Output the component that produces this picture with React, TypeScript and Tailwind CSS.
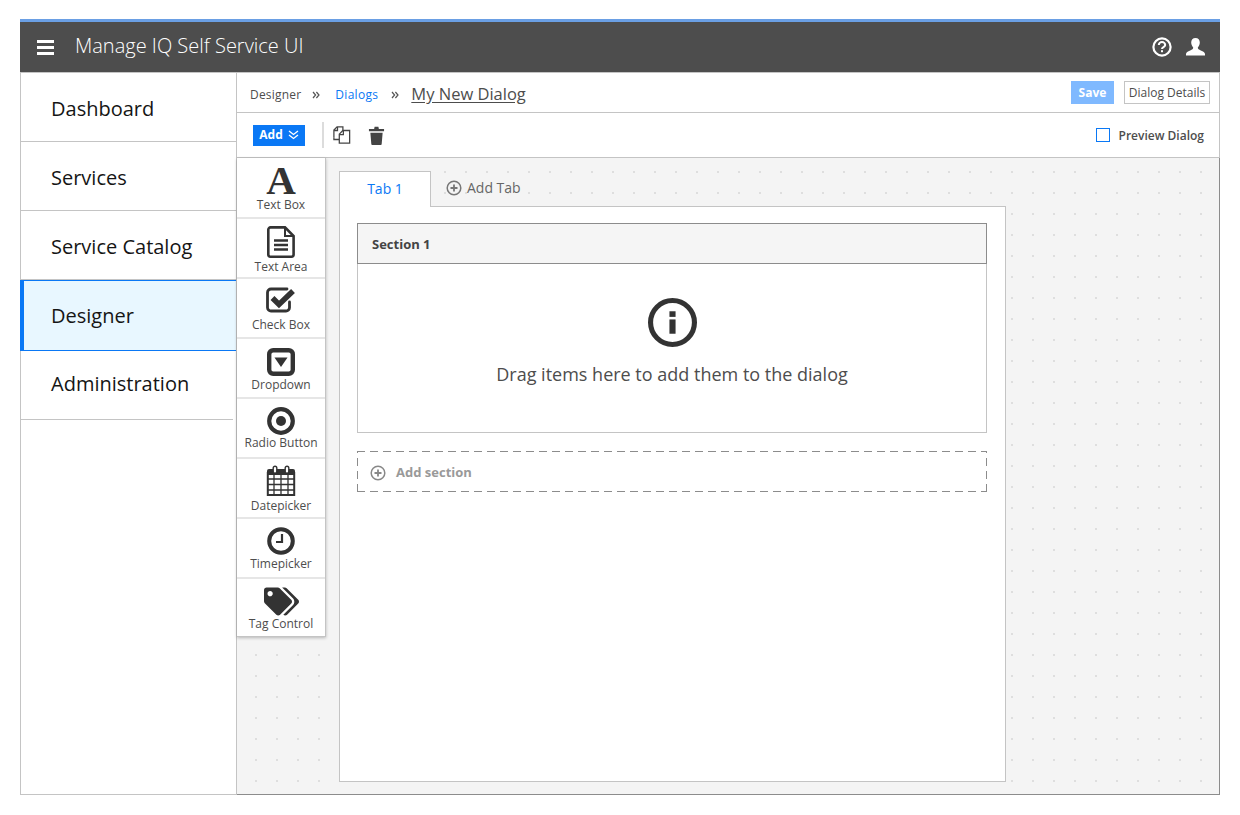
import React from "react";
import { FaTags } from "react-icons/fa";

const ic = "#333333";

const FileIcon = () => (
  <svg width="28" height="32" viewBox="0 0 28 32" fill="none">
    <path d="M3.500 1.400h14.500l8.600 8.600v18.500a2.200 2.200 0 0 1-2.200 2.200H3.500a2.200 2.200 0 0 1-2.200-2.200V3.600a2.200 2.200 0 0 1 2.200-2.200z" stroke={ic} strokeWidth="2.600" />
    <path d="M18 1.500v8.500h8.500" stroke={ic} strokeWidth="2" />
    <path d="M7 14.500h14M7 19h14M7 23.500h14" stroke={ic} strokeWidth="2.400" />
  </svg>
);
const CheckIcon = () => (
  <svg width="30" height="26" viewBox="0 0 30 26" fill="none">
    <path d="M21 2H5a3.500 3.500 0 0 0-3.500 3.500v15A3.500 3.500 0 0 0 5 24h15a3.500 3.500 0 0 0 3.500-3.500V15" stroke={ic} strokeWidth="2.800" strokeLinecap="round" />
    <path d="M6.500 11l6.500 6.500L27 4" stroke={ic} strokeWidth="5.500" />
  </svg>
);
const DropIcon = () => (
  <svg width="28" height="28" viewBox="0 0 28 28" fill="none">
    <rect x="2.200" y="2.200" width="23.600" height="23.600" rx="4" stroke={ic} strokeWidth="4.400" />
    <path d="M7.500 9.500h13L14 19z" fill={ic} />
  </svg>
);
const RadioIcon = () => (
  <svg width="28" height="28" viewBox="0 0 28 28" fill="none">
    <circle cx="14" cy="14" r="11.800" stroke={ic} strokeWidth="4.200" />
    <circle cx="14" cy="14" r="5" fill={ic} />
  </svg>
);
const CalIcon = () => (
  <svg width="30" height="32" viewBox="0 0 30 32" fill="none">
    <path d="M3 4h24a2 2 0 0 1 2 2v4H1V6a2 2 0 0 1 2-2z" fill={ic} />
    <rect x="1.800" y="8" width="26.400" height="22" stroke={ic} strokeWidth="2" />
    <path d="M1 14h28M1 19.500h28M1 25h28M8 9v21M15 9v21M22 9v21" stroke={ic} strokeWidth="1.300" />
    <rect x="7.200" y="1.200" width="3.600" height="7" rx="1.800" fill="#fff" stroke={ic} strokeWidth="1.400" />
    <rect x="19.200" y="1.200" width="3.600" height="7" rx="1.800" fill="#fff" stroke={ic} strokeWidth="1.400" />
  </svg>
);
const ClockIcon = () => (
  <svg width="28" height="28" viewBox="0 0 28 28" fill="none">
    <circle cx="14" cy="14" r="11.800" stroke={ic} strokeWidth="4" />
    <path d="M15 7v8H9" stroke={ic} strokeWidth="2.200" />
  </svg>
);
const PlusCircle = ({ color, size }: { color: string; size: number }) => (
  <svg width={size} height={size} viewBox="0 0 16 16" fill="none">
    <circle cx="8" cy="8" r="6.800" stroke={color} strokeWidth="1.500" />
    <path d="M8 4.500v7M4.500 8h7" stroke={color} strokeWidth="1.800" />
  </svg>
);
const DoubleChevronRight = () => (
  <svg width="8" height="8" viewBox="0 0 8 8" fill="none">
    <path d="M1 1l2.600 3L1 7M4.400 1L7 4 4.400 7" stroke="#555" strokeWidth="1.200" />
  </svg>
);

const palette: { label: string; icon: React.ReactNode; item: string; top: string }[] = [
  { label: "Text Box", icon: <span className="font-['Liberation_Serif',serif] font-bold text-[41px] leading-[30px] text-[#333]">A</span>, item: "h-[61px]", top: "h-[39px] pt-[7px]" },
  { label: "Text Area", icon: <FileIcon />, item: "h-[60px]", top: "h-[40px] pt-[7px]" },
  { label: "Check Box", icon: <CheckIcon />, item: "h-[60px]", top: "h-[38px] pt-[8px]" },
  { label: "Dropdown", icon: <DropIcon />, item: "h-[60px]", top: "h-[38px] pt-[9px]" },
  { label: "Radio Button", icon: <RadioIcon />, item: "h-[60px]", top: "h-[36px] pt-[8px]" },
  { label: "Datepicker", icon: <CalIcon />, item: "h-[60px]", top: "h-[39px] pt-[6px]" },
  { label: "Timepicker", icon: <ClockIcon />, item: "h-[60px]", top: "h-[37px] pt-[8px]" },
  { label: "Tag Control", icon: <FaTags size={35} color={ic} />, item: "h-[57px]", top: "h-[37px] pt-[5px]" },
];

const navClass: Record<string, string> = {
  Dashboard: "h-[69px] pt-[4px] border-b border-[#c4c4c4] pl-[30px]",
  Services: "h-[69px] pt-[4px] border-b border-[#c4c4c4] pl-[30px]",
  "Service Catalog": "h-[69px] pt-[4px] border-b border-[#c4c4c4] pl-[30px]",
  Designer: "h-[71px] -ml-[1px] bg-[#e8f7ff] border-l-[4px] border-y border-[#0a78f5] pl-[27px]",
  Administration: "h-[69px] pb-[3px] mr-[3px] border-b border-[#c4c4c4] pl-[30px]",
};

export default function App() {
  return (
    <div className="w-[1240px] h-[815px] bg-white pt-[19px] px-[20px] font-['Open_Sans',sans-serif] overflow-hidden">
      <header className="h-[54px] border-t-[3px] border-b border-t-[#6a9fe4] border-b-[#c4c4c4] bg-[#4d4d4d] flex items-center pl-[17px] pr-[15px]">
        <svg width="17" height="15" viewBox="0 0 17 15" className="shrink-0">
          <path d="M0 0h17v3H0zM0 6h17v3H0zM0 12h17v3H0z" fill="#fff" />
        </svg>
        <span className="ml-[21px] mb-[2px] text-[20px] font-light text-white leading-none">Manage IQ Self Service UI</span>
        <div className="ml-auto flex items-center gap-[14px]">
          <svg width="20" height="20" viewBox="0 0 20 20" fill="none">
            <circle cx="10" cy="10" r="8.600" stroke="#fff" strokeWidth="2.200" />
            <path d="M6.800 8a3.200 3 0 0 1 6.400 0c0 2-3.200 2.200-3.200 4" stroke="#fff" strokeWidth="2" />
            <rect x="9" y="13.200" width="2" height="2" fill="#fff" />
          </svg>
          <svg width="19" height="19" viewBox="0 0 19 19">
            <path d="M9.500 0c2.800 0 4.300 2 4.300 4.600 0 2-1 3.900-2 5 0 1.400 1 2 3 2.800 2.500 1 4.200 2 4.200 3.600v1.500H0V16c0-1.600 1.700-2.600 4.200-3.600 2-.8 3-1.400 3-2.800-1-1.100-2-3-2-5C5.200 2 6.700 0 9.500 0z" fill="#fff" />
          </svg>
        </div>
      </header>

      <div className="h-[722px] flex border-x border-b border-[#c4c4c4]">
        <nav className="w-[215px] shrink-0 flex flex-col">
          {Object.keys(navClass).map((n) => (
            <div key={n} className={`${navClass[n]} flex items-center text-[20px] text-[#151515]`}>
              {n}
            </div>
          ))}
        </nav>

        <main className="flex-1 min-w-0 flex flex-col border-l border-[#c4c4c4]">
          <div className="h-[40px] shrink-0 border-b border-[#c4c4c4] flex items-center pl-[13px] pr-[9px]">
            <div className="flex items-center pt-[3px]">
              <span className="mt-[1px] text-[12px] text-[#4d4d4d] tracking-[0.2px]">Designer</span>
              <span className="ml-[11px] mt-[2px] flex"><DoubleChevronRight /></span>
              <span className="ml-[15px] mt-[1px] text-[12px] text-[#0a78f5] tracking-[0.3px]">Dialogs</span>
              <span className="ml-[13px] mt-[2px] flex"><DoubleChevronRight /></span>
              <span className="ml-[12px] text-[16.500px] font-medium text-[#4d4d4d] underline underline-offset-2">My New Dialog</span>
            </div>
            <div className="ml-auto flex items-center gap-[10px]">
              <div className="w-[43px] h-[23px] bg-[#7fb9ff] text-white text-[12px] font-bold flex items-center justify-center">Save</div>
              <div className="w-[86px] h-[23px] border border-[#c4c4c4] text-[#4d4d4d] text-[12px] flex items-center justify-center">Dialog Details</div>
            </div>
          </div>

          <div className="h-[45px] shrink-0 border-b border-[#c4c4c4] flex items-center pl-[16px] pr-[15px]">
            <div className="w-[52px] h-[21px] bg-[#0a78f5] text-white text-[12px] font-bold flex items-center justify-center gap-[5px]">
              Add
              <svg width="11" height="10" viewBox="0 0 11 10" fill="none">
                <path d="M1 1l4.500 3.500L10 1M1 5l4.500 3.500L10 5" stroke="#fff" strokeWidth="1.300" />
              </svg>
            </div>
            <div className="ml-[17px] w-[2px] h-[26px] bg-[#dcdcdc]" />
            <svg className="ml-[9px]" width="18" height="18" viewBox="0 0 20 20" fill="none">
              <path d="M1 13V4.500L4.500 1H11v4M1 5h4V1" stroke="#444" strokeWidth="1.400" />
              <path d="M1 13v2h6" stroke="#444" strokeWidth="1.400" />
              <path d="M7 9l4-4h7.500v14H7z" fill="#fff" stroke="#444" strokeWidth="1.400" />
              <path d="M7 9.500h4.500V5" stroke="#444" strokeWidth="1.400" />
            </svg>
            <svg className="ml-[17px]" width="17" height="19" viewBox="0 0 18 20">
              <path d="M1 3h5.500L7 .8h4L11.500 3H17v2.500H1zM2.500 7h13l-1 12a1 1 0 0 1-1 1h-9a1 1 0 0 1-1-1z" fill="#444" />
            </svg>
            <div className="ml-auto flex items-center">
              <div className="w-[14px] h-[14px] border border-[#0a78f5] bg-white" />
              <span className="ml-[9px] mt-[2px] text-[12px] font-semibold text-[#4d4d4d]">Preview Dialog</span>
            </div>
          </div>

          <div className="flex-1 min-h-0 -mr-[1px] -mb-[1px] border-r border-b border-[#8c8c8c] flex items-start bg-[#f4f4f4] bg-[linear-gradient(90deg,transparent_2px,#f4f4f4_2px),linear-gradient(#dedede_2px,transparent_2px)] bg-[size:21px_21px] bg-[position:18px_13px]">
            <div className="w-[89px] shrink-0 bg-white border-r border-b border-[#c4c4c4] shadow-[0_1px_3px_rgba(0,0,0,0.25)]">
              {palette.map((p, i) => (
                <div key={p.label} className={`${p.item} ${i < 7 ? "border-b-2 border-[#e6e6e6]" : ""} flex flex-col items-center`}>
                  <div className={`${p.top} shrink-0 flex items-start justify-center`}>{p.icon}</div>
                  <div className="h-[15px] text-[12px] leading-[15px] text-[#4d4d4d] whitespace-nowrap">{p.label}</div>
                </div>
              ))}
            </div>

            <div className="ml-[13px] mt-[13px] w-[667px] flex flex-col">
              <div className="flex h-[36px] relative z-10">
                <div className="w-[92px] h-[36px] pb-[2px] bg-white border border-b-0 border-[#c4c4c4] text-[14px] text-[#0a78f5] flex items-center justify-center">Tab 1</div>
                <div className="ml-[15px] pb-[2px] flex items-center gap-[5px] text-[14px] text-[#666] h-[35px]">
                  <PlusCircle color="#777" size={16} />
                  Add Tab
                </div>
              </div>
              <div className="-mt-[1px] h-[576px] bg-white border border-[#c4c4c4] pl-[17px] pr-[18px] pt-[16px]">
                <div className="h-[210px] border-x border-b border-[#c4c4c4]">
                  <div className="-mx-[1px] h-[41px] pt-[2px] border border-[#8c8c8c] bg-[#f5f5f5] flex items-center pl-[14px] text-[13px] font-bold text-[#444]">Section 1</div>
                  <div className="flex flex-col items-center pt-[34px]">
                    <svg width="49" height="49" viewBox="0 0 48 48" fill="none">
                      <circle cx="24" cy="24" r="21.500" stroke={ic} strokeWidth="5" />
                      <rect x="21" y="13" width="6" height="5.500" fill={ic} />
                      <rect x="21" y="21" width="6" height="14" fill={ic} />
                    </svg>
                    <div className="mt-[15px] text-[18px] leading-[24px] text-[#4d4d4d]">Drag items here to add them to the dialog</div>
                  </div>
                </div>
                <div className="mt-[18px] h-[41px] pt-[2px] flex items-center pl-[13px] text-[13px] font-bold text-[#999] [background:repeating-linear-gradient(90deg,#8c8c8c_0_8px,transparent_8px_13px)_top/100%_1px_no-repeat,repeating-linear-gradient(90deg,#8c8c8c_0_8px,transparent_8px_13px)_bottom/100%_1px_no-repeat,repeating-linear-gradient(0deg,#8c8c8c_0_8px,transparent_8px_13px)_left/1px_100%_no-repeat,repeating-linear-gradient(0deg,#8c8c8c_0_8px,transparent_8px_13px)_right/1px_100%_no-repeat]">
                  <PlusCircle color="#888" size={16} />
                  <span className="ml-[10px]">Add section</span>
                </div>
              </div>
            </div>
          </div>
        </main>
      </div>
    </div>
  );
}
